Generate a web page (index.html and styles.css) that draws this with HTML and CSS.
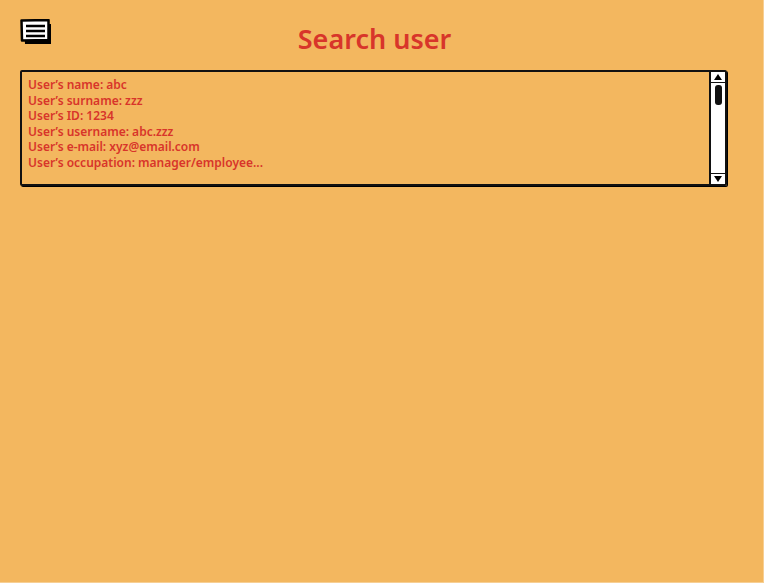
FILE: index.html
```html
<!DOCTYPE html>
<html>
<head>
<meta charset="utf-8">
<link rel="stylesheet" href="styles.css">
</head>
<body>
<div class="page">
  <header class="top">
    <svg class="menu" width="32" height="26" viewBox="0 0 32 26">
      <path d="M4 6 L31 5 L31 25 L5 25 Z" fill="#000"/>
      <path d="M1.5 1.5 L28.5 1 L28.5 21 L2 21.5 Z" fill="#fff" stroke="#000" stroke-width="2.5" stroke-linejoin="round"/>
      <path d="M6 7 H25 M6 12 H25 M6 17 H25" stroke="#000" stroke-width="2.5"/>
    </svg>
    <h1 class="title">Search user</h1>
  </header>
  <div class="box">
    <div class="lines">
      <div>User’s name: abc</div>
      <div>User’s surname: zzz</div>
      <div>User’s ID: 1234</div>
      <div>User’s username: abc.zzz</div>
      <div>User’s e-mail: xyz@email.com</div>
      <div>User’s occupation: manager/employee...</div>
    </div>
    <div class="scroll">
      <svg class="arrow" width="12" height="10" viewBox="0 0 12 10"><path d="M2 8 L6 2 L10 8 Z" fill="#000"/></svg>
      <div class="thumb"></div>
      <div class="track"></div>
      <svg class="arrow" width="12" height="10" viewBox="0 0 12 10"><path d="M2 2 L6 8 L10 2 Z" fill="#000"/></svg>
    </div>
  </div>
</div>
</body>
</html>
```
FILE: styles.css
```css
html, body {
  margin: 0;
  padding: 0;
  background: #f3b75f;
}
.page {
  width: 764px;
  height: 583px;
  box-sizing: border-box;
  padding: 19px 36px 0 20px;
  font-family: "Noto Sans", "Open Sans", sans-serif;
  border-right: 1px solid #f7cf94;
  border-bottom: 1px solid #f7cf94;
}
.top {
  position: relative;
  height: 51px;
}
.menu {
  position: absolute;
  left: 0;
  top: 0;
}
.title {
  margin: 0;
  padding-top: 3px;
  text-align: center;
  font-size: 27px;
  font-weight: 600;
  color: #d8352a;
  line-height: 34px;
  padding-left: 2px;
}
.box {
  display: flex;
  height: 116px;
  box-sizing: border-box;
  border: 2.5px solid #111;
  border-radius: 2px;
  box-shadow: 1px 1px 0 #000;
}
.lines {
  flex: 1;
  padding: 5px 0 0 6px;
  color: #d8352a;
  font-size: 12px;
  font-weight: 600;
  line-height: 15.6px;
}
.scroll {
  width: 14px;
  background: #fff;
  border-left: 2px solid #111;
  display: flex;
  flex-direction: column;
  align-items: center;
}
.arrow {
  display: block;
  flex: none;
  border-bottom: 1px solid #111;
  width: 14px;
}
.scroll .arrow:last-child {
  border-bottom: none;
  border-top: 1px solid #111;
}
.thumb {
  width: 7px;
  height: 20px;
  background: #111;
  border-radius: 3px;
  margin-top: 2px;
}
.track {
  flex: 1;
}
```
